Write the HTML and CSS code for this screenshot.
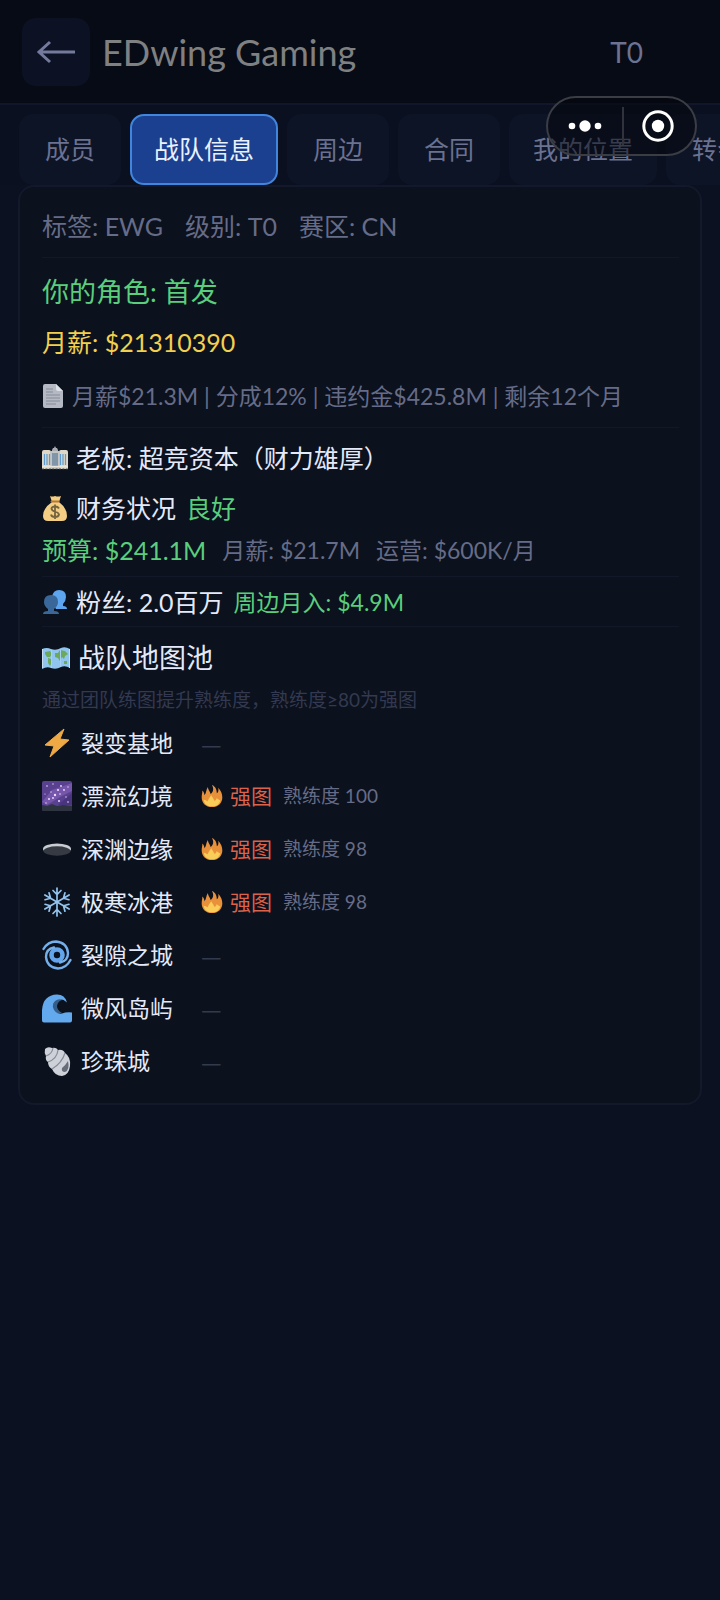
FILE: index.html
```
<!DOCTYPE html>
<html lang="zh-CN">
<head>
<meta charset="utf-8">
<meta name="viewport" content="width=device-width, initial-scale=1">
<title>EDwing Gaming</title>
<link rel="stylesheet" href="styles.css">
</head>
<body>
<svg class="defs" aria-hidden="true">
  <symbol id="flame" viewBox="0 0 32 32">
    <path fill="#e8913a" d="M16 32C7 32 1 26 1 18c0-4 1-6 1-10 2 2 3 4 3 7 3-3 2-8 5-12 0 4 3 6 4 10 4-3 5-7 2-13 5 2 7 7 7 12 2-1 3-4 2-8 4 4 6 9 6 14 0 8-6 14-15 14z"/>
    <path fill="#f9cd58" d="M16 31C9 31 4 27 4 21c2 1 4 1 5 3 2-2 3-6 6-9 1 3 4 5 4 8 2 0 3-1 4-4 2 2 3 3 5 3-1 5-5 9-12 9z"/>
  </symbol>
</svg>

<header class="topbar">
  <button class="back" type="button" aria-label="返回">
    <svg viewBox="0 0 40 24" width="40" height="24" fill="none" stroke="currentColor" stroke-width="3"><path d="M3 12H39M14 2L3 12L14 22"/></svg>
  </button>
  <h1 class="title">EDwing Gaming</h1>
  <span class="tier">T0</span>
</header>

<div class="capsule">
  <button type="button" aria-label="更多">
    <svg viewBox="0 0 34 14" width="34" height="14" fill="#fff"><circle cx="4" cy="7" r="3.3"/><circle cx="17" cy="7" r="5.7"/><circle cx="30" cy="7" r="3.3"/></svg>
  </button>
  <button type="button" aria-label="关闭">
    <svg viewBox="0 0 32 32" width="32" height="32"><circle cx="16" cy="16" r="14.2" fill="none" stroke="#fff" stroke-width="3"/><circle cx="16" cy="16" r="6.2" fill="#fff"/></svg>
  </button>
</div>

<nav class="tabs">
  <button class="tab" type="button">成员</button>
  <button class="tab active" type="button">战队信息</button>
  <button class="tab" type="button">周边</button>
  <button class="tab" type="button">合同</button>
  <button class="tab" type="button">我的位置</button>
  <button class="tab" type="button">转会</button>
</nav>

<main class="card">
  <section class="basic">
    <p class="row muted wide"><span>标签: EWG</span><span>级别: T0</span><span>赛区: CN</span></p>
  </section>

  <section class="role">
    <p class="row large green">你的角色: 首发</p>
    <p class="row yellow">月薪: $21310390</p>
    <p class="row small muted contract">
      <svg viewBox="0 0 20 24" width="22" height="24"><path fill="#b4b9c3" d="M2 0h11l7 7v15q0 2-2 2H2q-2 0-2-2V2q0-2 2-2z"/><path fill="#dde1e8" d="M13 0l7 7h-5q-2 0-2-2z"/><path stroke="#858b98" stroke-width="1" d="M3 5h7M3 8h7M3 11h14M3 14h14M3 17h14M3 20h10"/></svg>
      <span>月薪$21.3M | 分成12% | 违约金$425.8M | 剩余12个月</span>
    </p>
  </section>

  <section class="finance">
    <p class="row">
      <svg viewBox="0 0 26 24" width="26" height="24"><path fill="#a9adb1" d="M10 4l1-2h1l1-2 1 2h1l1 2v4h-6z"/><path fill="#ded8c9" d="M0 6q0-2 2-2h5q2 0 2 2v17H0zM17 6q0-2 2-2h5q2 0 2 2v17h-9z"/><path fill="#c3c5c4" d="M8 5h10v18H8z"/><path stroke="#5e9bd0" stroke-width="1.2" d="M2.500 8v11M5 8v11M7.500 8v11M18.500 8v11M21 8v11M23.500 8v11"/><path stroke="#66819e" stroke-width="1.400" d="M11 7v13M13 7v13M15 7v13"/><path stroke="#e9e5d9" stroke-width="1.400" d="M0 20.500h26"/><path stroke="#6d6f70" stroke-width="1" stroke-dasharray="2 1.400" d="M0 22.800h26"/></svg>
      <span>老板: 超竞资本（财力雄厚）</span>
    </p>
    <p class="row">
      <svg viewBox="0 0 26 28" width="26" height="28"><path fill="#f3ce83" d="M8 2q2 1 5 0 3 1 6 0l-2 6q8 6 8 14 0 5-5 5H6q-5 0-5-5Q1 14 10 8z"/><path stroke="#b97832" stroke-width="2" stroke-linecap="round" d="M9.500 7.500h7"/><path fill="none" stroke="#76643f" stroke-width="1.800" d="M17 14.500q-1-2-4-2t-3.500 2q0 2 3.500 3t4 3q-.5 2.500-4 2.500t-4-2.500M13 10.500v14.500"/></svg>
      <span>财务状况</span><span class="green status">良好</span>
    </p>
    <p class="row budget"><span class="green">预算: $241.1M</span><span class="small muted">月薪: $21.7M</span><span class="small muted">运营: $600K/月</span></p>
  </section>

  <section class="fans">
    <p class="row">
      <svg viewBox="0 0 26 26" width="26" height="26"><path fill="#5da5ee" d="M17 1q7 0 7 7 0 4-3 7v2q4 0 4 3H14q-4-5-4-12 1-7 7-7z"/><path fill="#3a6799" d="M9 6q7 0 7 7 0 4-4 7v2q5 0 5 3H1q0-3 5-3v-2q-4-3-4-7 0-7 7-7z"/></svg>
      <span>粉丝: 2.0百万</span><span class="small green status">周边月入: $4.9M</span>
    </p>
  </section>

  <section class="maps">
    <h2 class="row large">
      <svg viewBox="0 0 28 23" width="28" height="23"><path fill="#8fc5ee" d="M0 2q5-2 9 0 5 2 10-1 4-2 9 1v19q-5-3-9-1-5 3-10 1-4-2-9 1z"/><path fill="#6ca95b" d="M3 5l5-1 2 3-2 3-3 0-2-3zM6 11l3 1 1 3-2 4-2-3zM13 6l3 0 2-3 5 1 3 3-3 2-1 3-2-2-2 4-2-3-3-1zM22 14l3 0 0 3-3 0z"/><path fill="none" stroke="#c6def0" d="M.5 2v19M27.500 2v19"/><path fill="none" stroke="#a5d0f0" d="M9.500 3v18M18.500 2v18"/></svg>
      <span>战队地图池</span>
    </h2>
    <p class="hint">通过团队练图提升熟练度，熟练度≥80为强图</p>
    <ul class="map-list">
      <li>
        <svg viewBox="0 0 30 30" width="30" height="30"><path fill="#efaa45" stroke="#efaa45" stroke-linejoin="round" d="M22 1L3 17l9 1L8 29 27 12l-9-1z"/></svg>
        <span class="name">裂变基地</span><span class="none">—</span>
      </li>
      <li>
        <svg viewBox="0 0 30 30" width="30" height="30"><rect width="30" height="30" rx="2" fill="#59418f"/><path fill="#7656ab" d="M0 21L10 9 30 2v8L18 16 5 24z"/><path fill="#49357d" d="M16 24l14-12v12z"/><path fill="#2d3440" d="M0 24l5 1 5-2 5 2 6-1 9 1v3q0 2-2 2H2q-2 0-2-2z"/><g fill="#eadcff"><circle cx="5" cy="5" r=".8"/><circle cx="11" cy="3" r=".7"/><circle cx="19" cy="5" r=".9"/><circle cx="26" cy="6" r=".7"/><circle cx="16" cy="9" r="1.100"/><circle cx="22" cy="9" r=".9"/><circle cx="9" cy="11" r=".7"/><circle cx="13" cy="14" r="1.200"/><circle cx="18" cy="13" r=".8"/><circle cx="7" cy="18" r="1"/><circle cx="11" cy="17" r=".9"/><circle cx="3" cy="13" r=".6"/><circle cx="17" cy="20" r="1"/><circle cx="24" cy="16" r=".7"/><circle cx="26" cy="21" r=".8"/><circle cx="4" cy="22" r=".7"/></g></svg>
        <span class="name">漂流幻境</span><svg class="fire" viewBox="0 0 32 32" width="22" height="22"><use href="#flame"/></svg><span class="strong">强图</span><span class="skill">熟练度 100</span>
      </li>
      <li>
        <svg viewBox="0 0 30 30" width="30" height="30"><ellipse cx="15" cy="15" rx="14" ry="5.500" fill="#c9cdd2"/><ellipse cx="15" cy="17" rx="13.500" ry="4.700" fill="#363b43"/></svg>
        <span class="name">深渊边缘</span><svg class="fire" viewBox="0 0 32 32" width="22" height="22"><use href="#flame"/></svg><span class="strong">强图</span><span class="skill">熟练度 98</span>
      </li>
      <li>
        <svg viewBox="0 0 30 30" width="30" height="30" fill="none" stroke="#93c4ee" stroke-width="1.700" stroke-linecap="round"><g id="arm"><path d="M15 15V1M11 3.500l4 4 4-4"/></g><use href="#arm" transform="rotate(60 15 15)"/><use href="#arm" transform="rotate(120 15 15)"/><use href="#arm" transform="rotate(180 15 15)"/><use href="#arm" transform="rotate(240 15 15)"/><use href="#arm" transform="rotate(300 15 15)"/></svg>
        <span class="name">极寒冰港</span><svg class="fire" viewBox="0 0 32 32" width="22" height="22"><use href="#flame"/></svg><span class="strong">强图</span><span class="skill">熟练度 98</span>
      </li>
      <li>
        <svg viewBox="0 0 30 30" width="30" height="30" fill="none" stroke-linecap="round"><circle cx="15" cy="15" r="5.500" stroke="#62a5ea" stroke-width="4.600"/><path stroke="#75afe9" stroke-width="2.400" d="M1.500 9Q6 1.500 14 1.500 25 2.500 26 13q0 8-8 9.500M28.500 20Q24 28.500 16 28.500 5 27.500 4 17q0-8 8-9.500"/></svg>
        <span class="name">裂隙之城</span><span class="none">—</span>
      </li>
      <li>
        <svg viewBox="0 0 30 30" width="30" height="30"><path fill="#365d87" d="M19 6q-9-2-10.500 5Q8 18 14 21l6-1q-5-3-5-7 1-5 5-6z"/><path fill="#62a9ed" d="M0 26V17Q1 2 15 1.500q8 0 10 8-4-4-9-3-6 2-5 8 2 7 9 6 5-2 10-1v8q0 2-2 2H2q-2 0-2-2z"/></svg>
        <span class="name">微风岛屿</span><span class="none">—</span>
      </li>
      <li>
        <svg viewBox="0 0 30 30" width="30" height="30"><path fill="#ced2d8" d="M3 3Q6 0 10 2q4-1 6 2 5-1 7 3 6 4 5 13-1 9-8 10-7 0-10-7-4-2-4-7-3-2-2-6-2-3-1-7z"/><path fill="none" stroke="#858c99" stroke-width="1.200" d="M4 10q6-2 7-8M6 16q9-3 10-12M10 23Q20 17 23 7"/><path fill="#666d79" d="M26 15q2 9-3 11-4 0-3-4 3-2 6-7z"/></svg>
        <span class="name">珍珠城</span><span class="none">—</span>
      </li>
    </ul>
  </section>
</main>
</body>
</html>
```
FILE: styles.css
```
* {
  box-sizing: border-box;
}

body {
  margin: 0;
  min-height: 100vh;
  overflow-x: hidden;
  background: #0b1120;
  color: #e4e9fa;
  font-family: Lato, "Noto Sans CJK SC", sans-serif;
  font-size: 25px;
  font-weight: 400;
}

h1, h2, p, ul {
  margin: 0;
  padding: 0;
  font-weight: inherit;
}

button {
  border: 0;
  padding: 0;
  background: none;
  color: inherit;
  font: inherit;
}

svg {
  display: block;
  flex: none;
}

.defs {
  position: absolute;
  width: 0;
  height: 0;
}

.topbar {
  display: flex;
  align-items: center;
  height: 105px;
  padding: 0 77px 0 22px;
  background: #070b15;
  border-bottom: 2px solid #11162a;
}

.back {
  display: grid;
  place-items: center;
  width: 68px;
  height: 68px;
  border-radius: 14px;
  background: #0c1224;
  color: #747a9b;
}

.title {
  flex: 1;
  padding-left: 12px;
  color: #7f8082;
  font-size: 36px;
}

.tier {
  color: #6d7291;
  font-size: 28px;
}

.capsule {
  position: absolute;
  top: 96px;
  right: 23px;
  display: grid;
  grid-template-columns: 1fr 1fr;
  width: 151px;
  height: 60px;
  border: 2px solid #3b3d45;
  border-radius: 30px;
  background: rgba(4, 6, 12, 0.5);
}

.capsule button {
  display: grid;
  place-items: center;
}

.capsule button + button {
  position: relative;
}

.capsule button + button::before {
  content: "";
  position: absolute;
  left: 0;
  top: 9px;
  bottom: 9px;
  width: 2px;
  background: #30333c;
}

.tabs {
  display: flex;
  gap: 9px;
  padding: 9px 0 0 19px;
  overflow: hidden;
  background: #0b1020;
}

.tab {
  flex: none;
  min-width: 102px;
  height: 71px;
  padding: 0 22px 4px;
  border: 2px solid transparent;
  border-radius: 14px;
  background: #0d1426;
  color: #6b7190;
}

.tab.active {
  border-color: #4185dc;
  background: #1b408f;
  color: #eaf1ff;
}

.card {
  margin: 0 18px;
  padding: 0 21px 20px 22px;
  border: 2px solid #13192b;
  border-radius: 16px;
  background: #0b111d;
}

section + section {
  border-top: 1px solid #121828;
}

.row {
  display: flex;
  align-items: center;
  gap: 8px;
  line-height: 40px;
}

.wide {
  gap: 22px;
}

.large {
  font-size: 27px;
}

.small {
  font-size: 23px;
}

.muted {
  color: #666c88;
}

.green {
  color: #5ace7c;
}

.yellow {
  color: #f2d04e;
}

.status {
  padding-left: 2px;
}

.basic {
  padding: 19px 0 11px;
}

.role {
  padding: 14px 0 11px;
}

.role .yellow {
  margin-top: 10px;
}

.role .contract {
  margin-top: 14px;
}

.finance {
  padding: 10px 0 6px;
}

.finance .row + .row {
  margin-top: 10px;
}

.finance .row + .budget {
  gap: 16px;
  margin-top: 2px;
}

.fans {
  padding: 5px 0 4px;
}

.maps {
  padding-top: 11px;
}

.hint {
  margin-top: 8px;
  color: #333950;
  font-size: 19px;
  line-height: 28px;
}

.map-list {
  display: grid;
  gap: 9px;
  margin-top: 7px;
  list-style: none;
}

.map-list li {
  display: flex;
  align-items: center;
  height: 44px;
  line-height: 28px;
}

.name {
  width: 120px;
  margin-left: 9px;
  font-size: 23px;
}

.none {
  color: #343a4e;
  font-family: "Noto Sans CJK SC", sans-serif;
  font-size: 23px;
}

.strong {
  margin-left: 7px;
  color: #dc6249;
  font-size: 21px;
}

.skill {
  margin-left: 11px;
  color: #666c88;
  font-size: 19px;
}
```
